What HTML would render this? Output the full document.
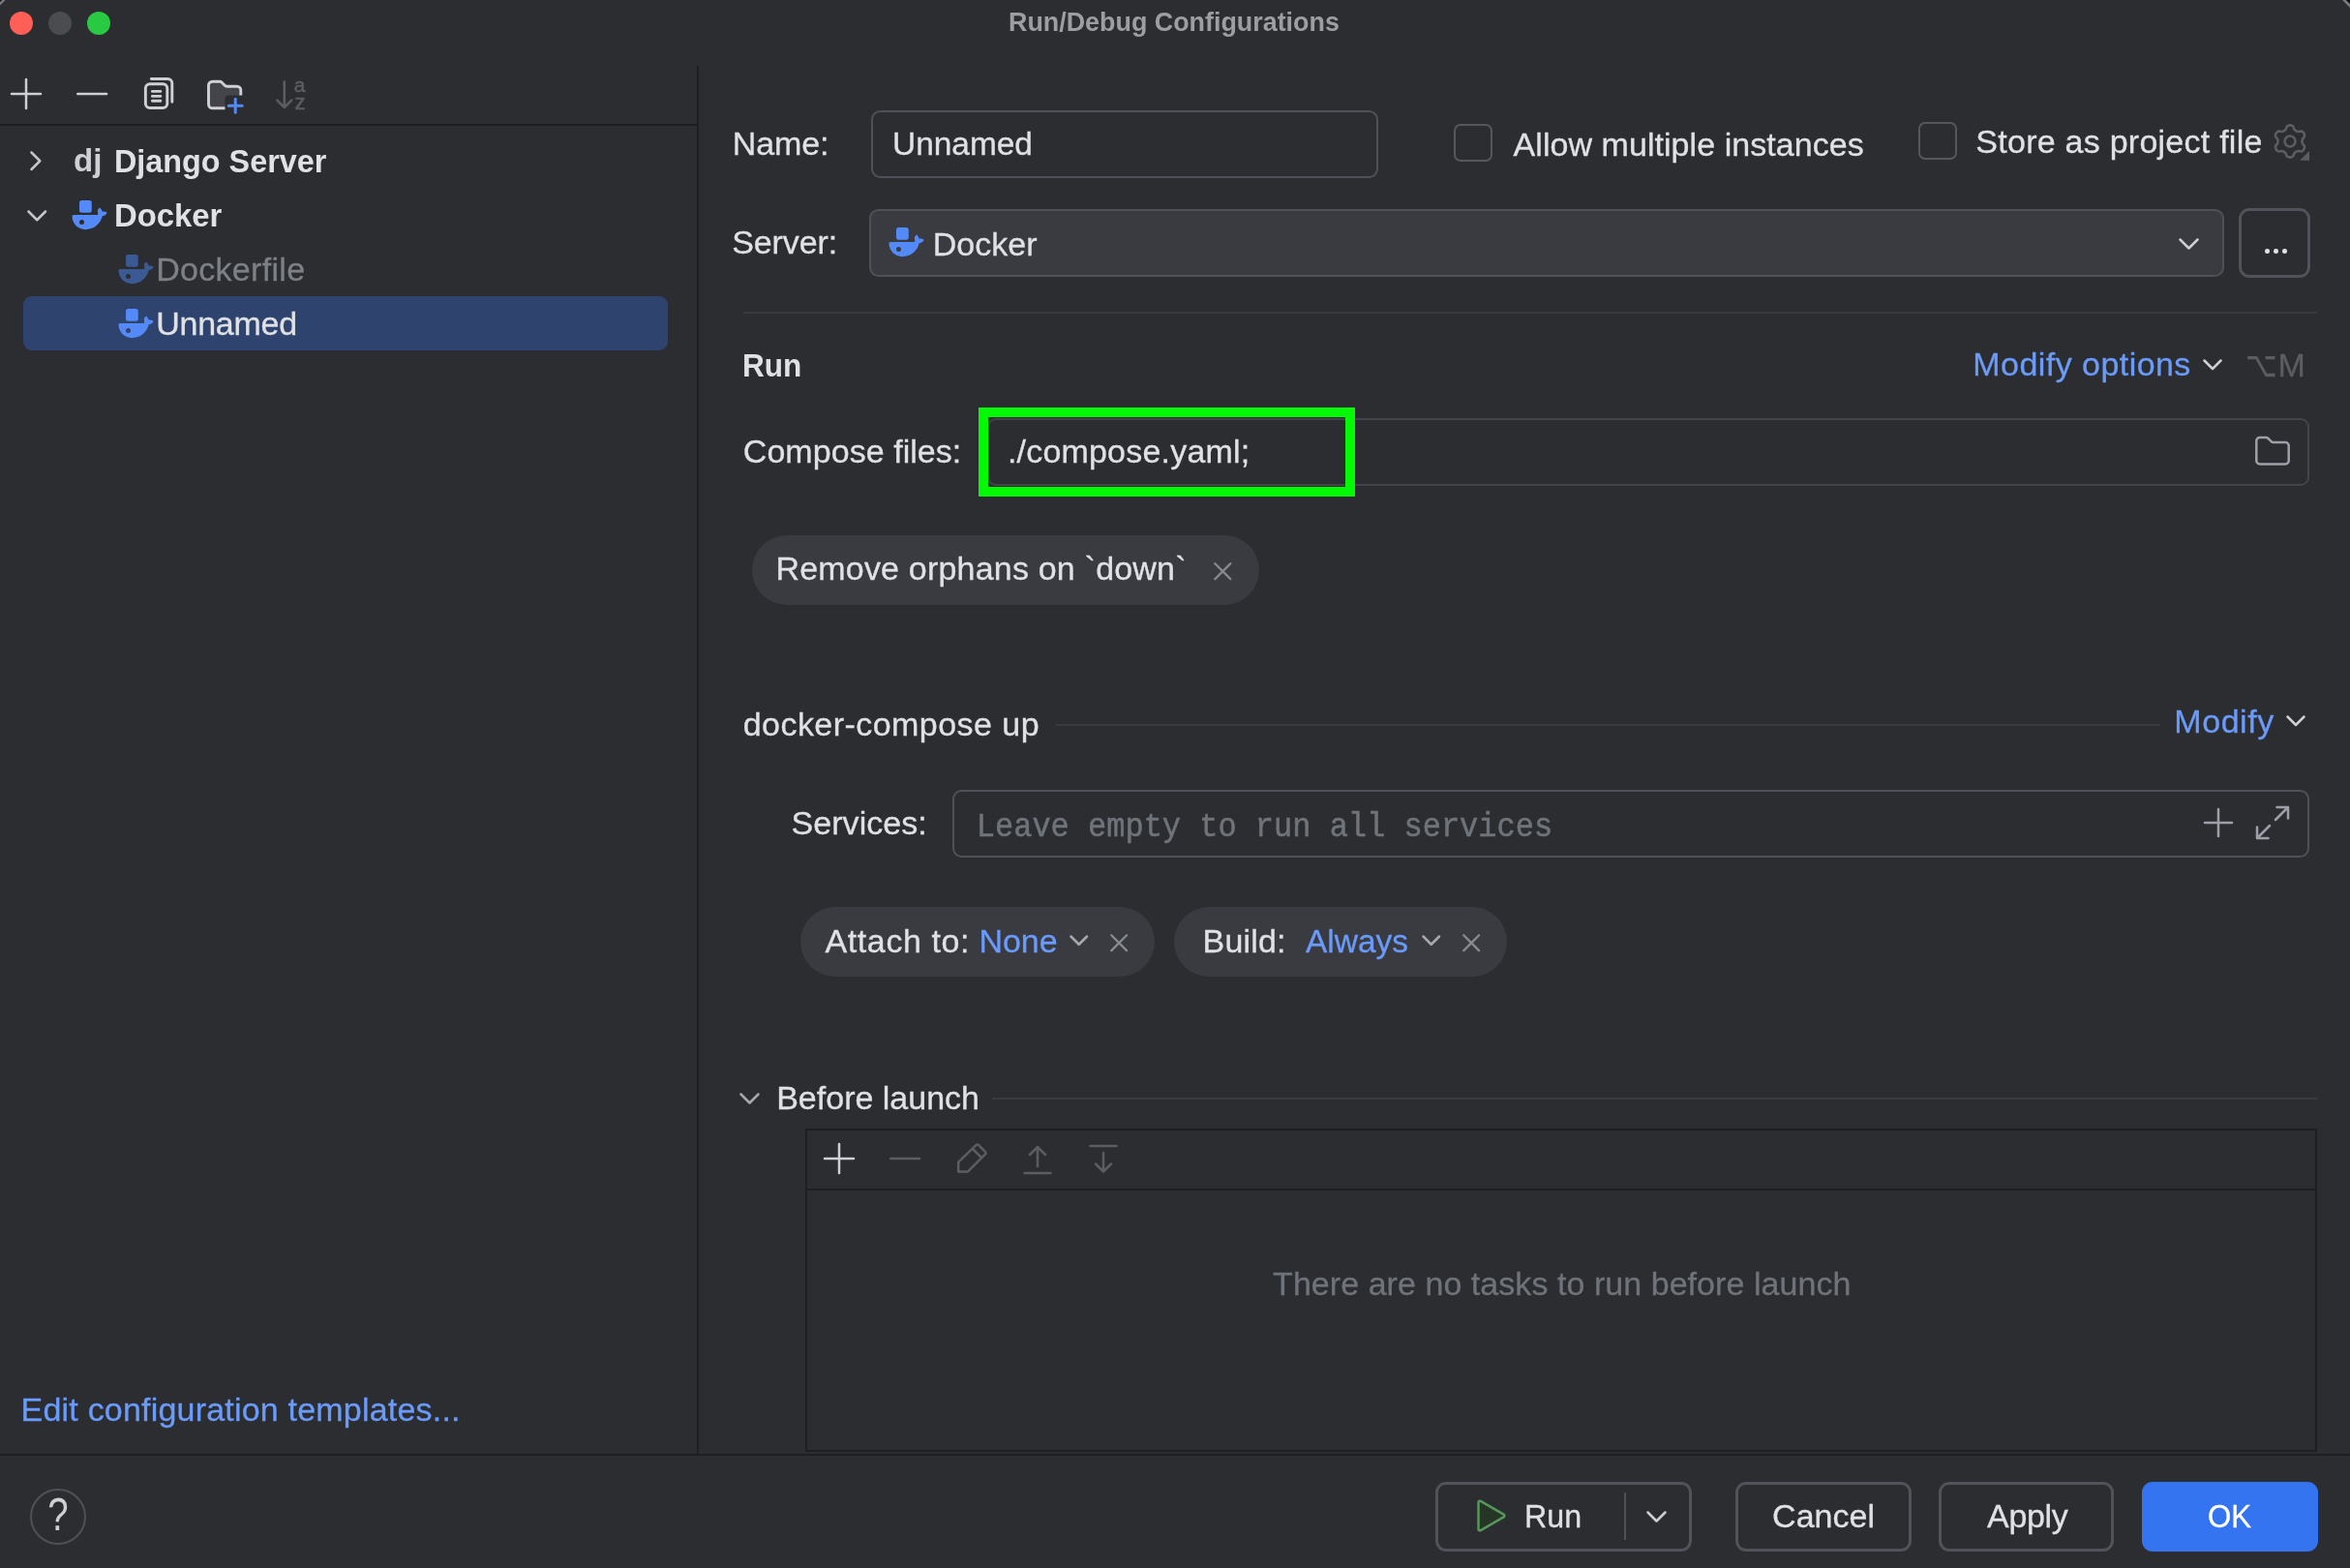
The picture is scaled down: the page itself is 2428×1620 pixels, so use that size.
<!DOCTYPE html>
<html lang="en"><head><meta charset="utf-8"><title>Run/Debug Configurations</title>
<style>
html,body{margin:0;padding:0}
body{width:2428px;height:1620px;background:#2b2d30;position:relative;overflow:hidden;font-family:"Liberation Sans", sans-serif;}
#app{position:absolute;left:0;top:0;width:2428px;height:1620px;will-change:transform}
.b{position:absolute;box-sizing:border-box}
.i{position:absolute;overflow:visible}
.t{position:absolute;white-space:pre;height:60px;line-height:60px;-webkit-text-stroke:0.3px}
</style></head>
<body>
<div id="app">
<div class="b" style="left:0px;top:127.5px;width:720px;height:2.5px;background:#1e1f22;"></div>
<div class="b" style="left:720px;top:68px;width:2px;height:1435px;background:#1e1f22;"></div>
<div class="b" style="left:0px;top:1501.5px;width:2428px;height:2.5px;background:#1e1f22;"></div>
<div class="b" style="left:0;top:0;width:7px;height:7px;background:linear-gradient(135deg,#0c0c0d 0,#0c0c0d 10%,#85878b 24%,#85878b 30%,rgba(43,45,48,0) 46%)"></div>
<div class="b" style="left:2419px;top:0;width:9px;height:9px;background:linear-gradient(225deg,#0c0c0d 0,#0c0c0d 18%,#85878b 30%,#85878b 36%,rgba(43,45,48,0) 50%)"></div>
<div class="b" style="left:9.9px;top:11.799999999999999px;width:24.200000000000003px;height:24.200000000000003px;background:#ff5f57;border-radius:50%;"></div>
<div class="b" style="left:49.9px;top:11.799999999999999px;width:24.199999999999996px;height:24.200000000000003px;background:#4b4c4f;border-radius:50%;"></div>
<div class="b" style="left:89.80000000000001px;top:11.799999999999999px;width:24.19999999999999px;height:24.200000000000003px;background:#2ac944;border-radius:50%;"></div>
<svg class="i" style="left:9.8px;top:80.0px" width="34" height="34" viewBox="-2 -2 34 34" ><path d="M15.0 0V30M0 15.0H30" fill="none" stroke="#ced0d6" stroke-width="2.5" stroke-linecap="round"/></svg>
<svg class="i" style="left:78.6px;top:93.8px" width="32.4" height="6" viewBox="0 0 32.4 6" ><path d="M1.25 3H31.15" fill="none" stroke="#ced0d6" stroke-width="2.5" stroke-linecap="round"/></svg>
<svg class="i" style="left:143px;top:77px" width="40" height="40" viewBox="0 0 40 40" ><g fill="none" stroke="#ced0d6" stroke-width="2.9" stroke-linecap="round" stroke-linejoin="round"><rect x="7.35" y="9.75" width="22.45" height="24.8" rx="4.5"/><path d="M13.3 4.45H30.3A4.5 4.5 0 0 1 34.8 8.95V28.3"/><path d="M14.4 17.4H22.8M14.4 22.4H22.8M14.4 27.3H22.8"/></g></svg>
<svg class="i" style="left:211px;top:77px" width="44" height="44" viewBox="0 0 44 44" ><path d="M4.5 11.2A4 4 0 0 1 8.5 7.2H15.9A3 3 0 0 1 18 8.1L21.2 11.3A3 3 0 0 0 23.3 12.2H33.8A4 4 0 0 1 37.8 16.2V30.8A4 4 0 0 1 33.8 34.8H8.5A4 4 0 0 1 4.5 30.8Z" fill="#43454a" stroke="#ced0d6" stroke-width="2.9" stroke-linejoin="round"/><rect x="21.5" y="21.5" width="24" height="24" rx="4" fill="#2b2d30"/><path d="M32.2 25.3V39.3M25.2 32.3H39.2" fill="none" stroke="#548af7" stroke-width="3" stroke-linecap="round"/></svg>
<svg class="i" style="left:280px;top:77px" width="40" height="40" viewBox="0 0 40 40" ><path d="M13.8 7.6V34M6.4 26.6L13.8 34L21.2 26.6" fill="none" stroke="#5c5d61" stroke-width="2.6" stroke-linecap="round" stroke-linejoin="round"/></svg>
<span class="t" style="left:303.7px;top:58px;font-size:21px;color:#5c5d61;-webkit-text-stroke:0.6px">a</span>
<span class="t" style="left:304.5px;top:75.5px;font-size:22px;color:#5c5d61;-webkit-text-stroke:0.6px">z</span>
<div class="b" style="left:24px;top:306px;width:666px;height:56px;background:#2e436e;border-radius:9px;"></div>
<svg class="i" style="left:30.1px;top:154.8px" width="13.75" height="22.5" viewBox="0 0 13.75 22.5" ><path d="M2.5 2.5L11.25 11.25L2.5 20.0" fill="none" stroke="#c3c6cd" stroke-width="2.5" stroke-linecap="round" stroke-linejoin="round"/></svg>
<svg class="i" style="left:26.8px;top:215.6px" width="22.5" height="13.75" viewBox="0 0 22.5 13.75" ><path d="M2.5 2.5L11.25 11.25L20.0 2.5" fill="none" stroke="#c3c6cd" stroke-width="2.5" stroke-linecap="round" stroke-linejoin="round"/></svg>
<svg class="i" style="left:72px;top:202px" width="40" height="40" viewBox="0 0 16 16" ><rect x="4" y="2" width="5.1" height="5.1" rx="1" fill="#548af7"/><path fill="#548af7" d="M1.6 8H11.3C11.65 7.95 11.8 7.65 11.7 7.3C11.4 6.5 11.5 5.75 12.05 5.25C12.25 5.1 12.5 5.1 12.7 5.3C13.1 5.7 13.4 6.2 13.5 6.7C14.1 6.5 14.7 6.6 15.2 6.9C15.4 7.05 15.4 7.3 15.25 7.5C14.8 8.05 14.2 8.4 13.5 8.5C12.6 11.8 10 14.05 6.5 14.05C3.5 14.05 1 11.6 1 8.6C1 8.3 1.3 8 1.6 8Z"/><circle cx="5" cy="10.95" r="1" fill="#2b2d30"/></svg>
<svg class="i" style="left:120px;top:258px" width="40" height="40" viewBox="0 0 16 16" ><rect x="4" y="2" width="5.1" height="5.1" rx="1" fill="#3b5a94"/><path fill="#3b5a94" d="M1.6 8H11.3C11.65 7.95 11.8 7.65 11.7 7.3C11.4 6.5 11.5 5.75 12.05 5.25C12.25 5.1 12.5 5.1 12.7 5.3C13.1 5.7 13.4 6.2 13.5 6.7C14.1 6.5 14.7 6.6 15.2 6.9C15.4 7.05 15.4 7.3 15.25 7.5C14.8 8.05 14.2 8.4 13.5 8.5C12.6 11.8 10 14.05 6.5 14.05C3.5 14.05 1 11.6 1 8.6C1 8.3 1.3 8 1.6 8Z"/><circle cx="5" cy="10.95" r="1" fill="#2b2d30"/></svg>
<svg class="i" style="left:120px;top:314px" width="40" height="40" viewBox="0 0 16 16" ><rect x="4" y="2" width="5.1" height="5.1" rx="1" fill="#548af7"/><path fill="#548af7" d="M1.6 8H11.3C11.65 7.95 11.8 7.65 11.7 7.3C11.4 6.5 11.5 5.75 12.05 5.25C12.25 5.1 12.5 5.1 12.7 5.3C13.1 5.7 13.4 6.2 13.5 6.7C14.1 6.5 14.7 6.6 15.2 6.9C15.4 7.05 15.4 7.3 15.25 7.5C14.8 8.05 14.2 8.4 13.5 8.5C12.6 11.8 10 14.05 6.5 14.05C3.5 14.05 1 11.6 1 8.6C1 8.3 1.3 8 1.6 8Z"/><circle cx="5" cy="10.95" r="1" fill="#2e436e"/></svg>
<div class="b" style="left:900.2px;top:114.4px;width:523.8px;height:69.6px;border:2.5px solid #4e5157;border-radius:9.5px;"></div>
<div class="b" style="left:1502.3px;top:128px;width:39.299999999999955px;height:39.30000000000001px;border:2.5px solid #55575d;border-radius:7px;"></div>
<div class="b" style="left:1982.3px;top:126.2px;width:39.299999999999955px;height:39.3px;border:2.5px solid #55575d;border-radius:7px;"></div>
<svg class="i" style="left:2345.1px;top:125.1px" width="42" height="42" viewBox="0 0 42 42" ><path d="M33.50 21.00L33.53 20.45L33.61 19.90L33.75 19.32L33.95 18.72L34.25 18.06L35.05 17.23L35.81 16.33L35.99 15.54L36.01 14.78L35.90 14.05L35.69 13.35L35.38 12.70L34.97 12.10L34.47 11.57L33.89 11.11L33.22 10.75L32.45 10.51L31.29 10.71L30.17 10.99L29.45 10.93L28.83 10.80L28.26 10.63L27.74 10.42L27.25 10.17L26.79 9.88L26.35 9.53L25.92 9.12L25.50 8.64L25.08 8.05L24.77 6.95L24.36 5.84L23.77 5.29L23.12 4.89L22.43 4.62L21.72 4.45L21.00 4.40L20.28 4.45L19.57 4.62L18.88 4.89L18.23 5.29L17.64 5.84L17.23 6.95L16.92 8.05L16.50 8.64L16.08 9.12L15.65 9.53L15.21 9.88L14.75 10.17L14.26 10.42L13.74 10.63L13.17 10.80L12.55 10.93L11.83 10.99L10.71 10.71L9.55 10.51L8.78 10.75L8.11 11.11L7.53 11.57L7.03 12.10L6.62 12.70L6.31 13.35L6.10 14.05L5.99 14.78L6.01 15.54L6.19 16.33L6.95 17.23L7.75 18.06L8.05 18.72L8.25 19.32L8.39 19.90L8.47 20.45L8.50 21.00L8.47 21.55L8.39 22.10L8.25 22.68L8.05 23.28L7.75 23.94L6.95 24.77L6.19 25.67L6.01 26.46L5.99 27.22L6.10 27.95L6.31 28.65L6.62 29.30L7.03 29.90L7.53 30.43L8.11 30.89L8.78 31.25L9.55 31.49L10.71 31.29L11.83 31.01L12.55 31.07L13.17 31.20L13.74 31.37L14.26 31.58L14.75 31.83L15.21 32.12L15.65 32.47L16.08 32.88L16.50 33.36L16.92 33.95L17.23 35.05L17.64 36.16L18.23 36.71L18.88 37.11L19.57 37.38L20.28 37.55L21.00 37.60L21.72 37.55L22.43 37.38L23.12 37.11L23.77 36.71L24.36 36.16L24.77 35.05L25.08 33.95L25.50 33.36L25.92 32.88L26.35 32.47L26.79 32.12L27.25 31.83L27.74 31.58L28.26 31.37L28.83 31.20L29.45 31.07L30.17 31.01L31.29 31.29L32.45 31.49L33.22 31.25L33.89 30.89L34.47 30.43L34.97 29.90L35.38 29.30L35.69 28.65L35.90 27.95L36.01 27.22L35.99 26.46L35.81 25.67L35.05 24.77L34.25 23.94L33.95 23.28L33.75 22.68L33.61 22.10L33.53 21.55Z" fill="none" stroke="#5c5d61" stroke-width="2.6" stroke-linejoin="round"/><circle cx="21" cy="21" r="5.5" fill="none" stroke="#5c5d61" stroke-width="2.6"/><path d="M41 30.9V40.7H31Z" fill="#5c5d61"/></svg>
<div class="b" style="left:898.3px;top:216px;width:1399.3px;height:70px;background:#393b41;border:2.5px solid #4e5157;border-radius:9.5px;"></div>
<svg class="i" style="left:916px;top:230px" width="40" height="40" viewBox="0 0 16 16" ><rect x="4" y="2" width="5.1" height="5.1" rx="1" fill="#548af7"/><path fill="#548af7" d="M1.6 8H11.3C11.65 7.95 11.8 7.65 11.7 7.3C11.4 6.5 11.5 5.75 12.05 5.25C12.25 5.1 12.5 5.1 12.7 5.3C13.1 5.7 13.4 6.2 13.5 6.7C14.1 6.5 14.7 6.6 15.2 6.9C15.4 7.05 15.4 7.3 15.25 7.5C14.8 8.05 14.2 8.4 13.5 8.5C12.6 11.8 10 14.05 6.5 14.05C3.5 14.05 1 11.6 1 8.6C1 8.3 1.3 8 1.6 8Z"/><circle cx="5" cy="10.95" r="1" fill="#393b41"/></svg>
<svg class="i" style="left:2249.5px;top:244.5px" width="23.0" height="14.0" viewBox="0 0 23.0 14.0" ><path d="M2.5 2.5L11.5 11.5L20.5 2.5" fill="none" stroke="#ced0d6" stroke-width="2.5" stroke-linecap="round" stroke-linejoin="round"/></svg>
<div class="b" style="left:2312.6px;top:214.6px;width:74.20000000000027px;height:72.20000000000002px;border:3px solid #505359;border-radius:11px;"></div>
<div class="b" style="left:2340.0px;top:257.3px;width:4.600000000000364px;height:4.600000000000023px;background:#dfe1e5;border-radius:50%;"></div>
<div class="b" style="left:2349.1px;top:257.3px;width:4.600000000000364px;height:4.600000000000023px;background:#dfe1e5;border-radius:50%;"></div>
<div class="b" style="left:2358.1px;top:257.3px;width:4.600000000000364px;height:4.600000000000023px;background:#dfe1e5;border-radius:50%;"></div>
<div class="b" style="left:768px;top:322px;width:1626px;height:2px;background:#393b40;"></div>
<svg class="i" style="left:2274.5px;top:370.2px" width="22.0" height="13.5" viewBox="0 0 22.0 13.5" ><path d="M2.5 2.5L11.0 11.0L19.5 2.5" fill="none" stroke="#ced0d6" stroke-width="2.5" stroke-linecap="round" stroke-linejoin="round"/></svg>
<span class="t" style="left:2319.5px;top:346.5px;font-size:36px;color:#5c5d61;transform:scaleX(0.78);transform-origin:0 50%;font-family:'DejaVu Sans',sans-serif">⌥</span>
<span class="t" style="left:2353.5px;top:346.7px;font-size:34px;color:#5c5d61">M</span>
<div class="b" style="left:1020px;top:432px;width:1366px;height:69.5px;border:2px solid #43454a;border-radius:9px;"></div>
<div class="b" style="left:1010.8px;top:421.2px;width:388.79999999999995px;height:92.00000000000006px;border:10.5px solid #04f904;"></div>
<svg class="i" style="left:2326px;top:446px" width="44" height="40" viewBox="0 0 44 40" ><path d="M5.3 9.5A3.5 3.5 0 0 1 8.8 6H15.3A3 3 0 0 1 17.4 6.9L20.6 10.1A3 3 0 0 0 22.7 11H35.2A3.5 3.5 0 0 1 38.7 14.5V30A3.5 3.5 0 0 1 35.2 33.5H8.8A3.5 3.5 0 0 1 5.3 30Z" fill="none" stroke="#9da0a8" stroke-width="2.5" stroke-linejoin="round"/></svg>
<div class="b" style="left:777px;top:553px;width:524px;height:72px;background:#393b41;border-radius:36px;"></div>
<svg class="i" style="left:1253.3px;top:579.7px" width="20.6" height="20.6" viewBox="0 0 20.6 20.6" ><path d="M2.3 2.3L18.3 18.3M18.3 2.3L2.3 18.3" fill="none" stroke="#868a91" stroke-width="2.3" stroke-linecap="round"/></svg>
<div class="b" style="left:1090.5px;top:748px;width:1141.5px;height:2px;background:#393b40;"></div>
<svg class="i" style="left:2361.0px;top:737.8px" width="22.0" height="13.5" viewBox="0 0 22.0 13.5" ><path d="M2.5 2.5L11.0 11.0L19.5 2.5" fill="none" stroke="#ced0d6" stroke-width="2.5" stroke-linecap="round" stroke-linejoin="round"/></svg>
<div class="b" style="left:984.3px;top:816px;width:1401.8999999999999px;height:69.60000000000002px;border:2.5px solid #4e5157;border-radius:9.5px;"></div>
<svg class="i" style="left:2276.0px;top:834.0px" width="32" height="32" viewBox="-2 -2 32 32" ><path d="M14.0 0V28M0 14.0H28" fill="none" stroke="#9da0a8" stroke-width="2.5" stroke-linecap="round"/></svg>
<svg class="i" style="left:2326px;top:828px" width="44" height="44" viewBox="0 0 44 44" ><path d="M26.5 6H38V17.5M38 6L25 19M17.5 38H6V26.5M6 38L19 25" fill="none" stroke="#9da0a8" stroke-width="2.5" stroke-linecap="round" stroke-linejoin="round"/></svg>
<div class="b" style="left:826.8px;top:937px;width:366.20000000000005px;height:72px;background:#393b41;border-radius:36px;"></div>
<div class="b" style="left:1212.6px;top:937px;width:344.4000000000001px;height:72px;background:#393b41;border-radius:36px;"></div>
<svg class="i" style="left:1103.5px;top:965.2px" width="21.5" height="13.25" viewBox="0 0 21.5 13.25" ><path d="M2.5 2.5L10.75 10.75L19.0 2.5" fill="none" stroke="#a6a9af" stroke-width="2.5" stroke-linecap="round" stroke-linejoin="round"/></svg>
<svg class="i" style="left:1146.4px;top:963.8px" width="20.4" height="20.4" viewBox="0 0 20.4 20.4" ><path d="M2.3 2.3L18.1 18.1M18.1 2.3L2.3 18.1" fill="none" stroke="#868a91" stroke-width="2.3" stroke-linecap="round"/></svg>
<svg class="i" style="left:1467.7px;top:965.2px" width="21.5" height="13.25" viewBox="0 0 21.5 13.25" ><path d="M2.5 2.5L10.75 10.75L19.0 2.5" fill="none" stroke="#a6a9af" stroke-width="2.5" stroke-linecap="round" stroke-linejoin="round"/></svg>
<svg class="i" style="left:1509.6px;top:963.8px" width="20.4" height="20.4" viewBox="0 0 20.4 20.4" ><path d="M2.3 2.3L18.1 18.1M18.1 2.3L2.3 18.1" fill="none" stroke="#868a91" stroke-width="2.3" stroke-linecap="round"/></svg>
<svg class="i" style="left:762.5px;top:1127.5px" width="23.0" height="14.0" viewBox="0 0 23.0 14.0" ><path d="M2.5 2.5L11.5 11.5L20.5 2.5" fill="none" stroke="#a6a9af" stroke-width="2.5" stroke-linecap="round" stroke-linejoin="round"/></svg>
<div class="b" style="left:1024.5px;top:1133.5px;width:1369.5px;height:2.0px;background:#393b40;"></div>
<div class="b" style="left:832px;top:1166px;width:1562px;height:333.5px;border:2px solid #1e1f22;"></div>
<div class="b" style="left:834px;top:1228px;width:1558px;height:2px;background:#1e1f22;"></div>
<svg class="i" style="left:849.6px;top:1179.8px" width="34" height="34" viewBox="-2 -2 34 34" ><path d="M15.0 0V30M0 15.0H30" fill="none" stroke="#ced0d6" stroke-width="2.5" stroke-linecap="round"/></svg>
<svg class="i" style="left:918.7px;top:1193.8px" width="32.3" height="6" viewBox="0 0 32.3 6" ><path d="M1.25 3H31.05" fill="none" stroke="#5c5d61" stroke-width="2.5" stroke-linecap="round"/></svg>
<svg class="i" style="left:984px;top:1177px" width="40" height="40" viewBox="0 0 40 40" ><path d="M27.2 6.2L33.8 12.8A2 2 0 0 1 33.8 15.6L16 33.4H6.2V23.6L24.4 6.2A2 2 0 0 1 27.2 6.2ZM20.5 9.5L30 19" fill="none" stroke="#5c5d61" stroke-width="2.5" stroke-linejoin="round"/></svg>
<svg class="i" style="left:1052px;top:1177px" width="40" height="40" viewBox="0 0 40 40" ><path d="M20 8V28M12 16L20 8L28 16M6.5 35H33.5" fill="none" stroke="#5c5d61" stroke-width="2.5" stroke-linecap="round" stroke-linejoin="round"/></svg>
<svg class="i" style="left:1120px;top:1177px" width="40" height="40" viewBox="0 0 40 40" ><path d="M6.5 7H33.5M20 14V33.5M12 25.5L20 33.5L28 25.5" fill="none" stroke="#5c5d61" stroke-width="2.5" stroke-linecap="round" stroke-linejoin="round"/></svg>
<div class="b" style="left:31px;top:1537.5px;width:58px;height:58.0px;border:2px solid #4e5157;border-radius:50%;"></div>
<span class="t" style="left:30px;top:1535px;width:60px;text-align:center;font-size:48px;color:#ced0d6;transform:scaleX(0.8);-webkit-text-stroke:0">?</span>
<div class="b" style="left:1482.7px;top:1530.8px;width:265.5999999999999px;height:72.0px;border:3px solid #505359;border-radius:11px;"></div>
<svg class="i" style="left:1520px;top:1546px" width="40" height="40" viewBox="0 0 40 40" ><path d="M7.5 6.2A1.5 1.5 0 0 1 9.8 4.9L33.6 18.7A1.5 1.5 0 0 1 33.6 21.3L9.8 35.1A1.5 1.5 0 0 1 7.5 33.8Z" fill="#253627" stroke="#57965c" stroke-width="2.5" stroke-linejoin="round"/></svg>
<div class="b" style="left:1678px;top:1542px;width:2px;height:49px;background:#4e5157;"></div>
<svg class="i" style="left:1700.3px;top:1559.5px" width="23.0" height="14.0" viewBox="0 0 23.0 14.0" ><path d="M2.5 2.5L11.5 11.5L20.5 2.5" fill="none" stroke="#ced0d6" stroke-width="2.5" stroke-linecap="round" stroke-linejoin="round"/></svg>
<div class="b" style="left:1792.5px;top:1530.8px;width:182.0999999999999px;height:72.0px;border:3px solid #505359;border-radius:11px;"></div>
<div class="b" style="left:2002.5px;top:1530.8px;width:181.9000000000001px;height:72.0px;border:3px solid #505359;border-radius:11px;"></div>
<div class="b" style="left:2212.5px;top:1530.8px;width:182.0px;height:72.0px;background:#3574f0;border-radius:11px;"></div>
<span class="t" style="left:1042.42px;top:-7.0px;font-size:28px;font-weight:700;color:#9d9ea2;letter-spacing:0.00px;-webkit-text-stroke:0;transform:scaleX(0.9597);transform-origin:0 50%;">Run/Debug Configurations</span>
<span class="t" style="left:75.68px;top:135.3px;font-size:34px;font-weight:700;color:#ced0d6;letter-spacing:0.00px;-webkit-text-stroke:0;transform:scaleX(0.9736);transform-origin:0 50%;">dj</span>
<span class="t" style="left:117.86px;top:135.6px;font-size:34px;font-weight:700;color:#dfe1e5;letter-spacing:0.00px;-webkit-text-stroke:0;transform:scaleX(0.9515);transform-origin:0 50%;">Django Server</span>
<span class="t" style="left:117.83px;top:191.6px;font-size:34px;font-weight:700;color:#dfe1e5;letter-spacing:0.00px;-webkit-text-stroke:0;transform:scaleX(0.9662);transform-origin:0 50%;">Docker</span>
<span class="t" style="left:161.2px;top:248.0px;font-size:34px;font-weight:400;color:#7d8087;letter-spacing:0.30px;">Dockerfile</span>
<span class="t" style="left:161.2px;top:304.0px;font-size:34px;font-weight:400;color:#dfe1e5;letter-spacing:-0.25px;">Unnamed</span>
<span class="t" style="left:756.8px;top:118.4px;font-size:34px;font-weight:400;color:#dfe1e5;letter-spacing:-0.15px;">Name:</span>
<span class="t" style="left:921.84px;top:118.2px;font-size:34px;font-weight:400;color:#dfe1e5;letter-spacing:0.00px;transform:scaleX(0.9832);transform-origin:0 50%;">Unnamed</span>
<span class="t" style="left:1563.6px;top:118.5px;font-size:34px;font-weight:400;color:#dfe1e5;letter-spacing:0.05px;">Allow multiple instances</span>
<span class="t" style="left:2041.35px;top:115.8px;font-size:34px;font-weight:400;color:#dfe1e5;letter-spacing:0.25px;">Store as project file</span>
<span class="t" style="left:756.15px;top:220.3px;font-size:34px;font-weight:400;color:#dfe1e5;letter-spacing:-0.10px;">Server:</span>
<span class="t" style="left:963.8px;top:222.3px;font-size:34px;font-weight:400;color:#dfe1e5;letter-spacing:0.00px;">Docker</span>
<span class="t" style="left:766.91px;top:347.0px;font-size:34px;font-weight:700;color:#dfe1e5;letter-spacing:0.00px;-webkit-text-stroke:0;transform:scaleX(0.9279);transform-origin:0 50%;">Run</span>
<span class="t" style="left:2038.3px;top:346.4px;font-size:34px;font-weight:400;color:#6b9bfa;letter-spacing:0.45px;">Modify options</span>
<span class="t" style="left:767.8px;top:436.2px;font-size:34px;font-weight:400;color:#dfe1e5;letter-spacing:0.05px;">Compose files:</span>
<span class="t" style="left:1040.9px;top:436.2px;font-size:34px;font-weight:400;color:#dfe1e5;letter-spacing:0.20px;">./compose.yaml;</span>
<span class="t" style="left:801.4px;top:557.3px;font-size:34px;font-weight:400;color:#dfe1e5;letter-spacing:0.20px;">Remove orphans on `down`</span>
<span class="t" style="left:767.75px;top:718.0px;font-size:34px;font-weight:400;color:#dfe1e5;letter-spacing:0.45px;">docker-compose up</span>
<span class="t" style="left:2246.3px;top:715.0px;font-size:34px;font-weight:400;color:#6b9bfa;letter-spacing:0.55px;">Modify</span>
<span class="t" style="left:817.55px;top:819.8px;font-size:34px;font-weight:400;color:#dfe1e5;letter-spacing:0.05px;">Services:</span>
<span class="t" style="left:1008.8px;top:824.7px;font-size:32px;font-weight:400;color:#6f737a;letter-spacing:0.00px;font-family:'Liberation Mono', monospace;transform:scaleY(1.1);-webkit-text-stroke:0.5px;">Leave empty to run all services</span>
<span class="t" style="left:852.5px;top:941.6px;font-size:34px;font-weight:400;color:#dfe1e5;letter-spacing:0.60px;">Attach to:</span>
<span class="t" style="left:1011.6px;top:941.6px;font-size:34px;font-weight:400;color:#6b9bfa;letter-spacing:-0.10px;">None</span>
<span class="t" style="left:1242.6px;top:941.6px;font-size:34px;font-weight:400;color:#dfe1e5;letter-spacing:0.15px;">Build:</span>
<span class="t" style="left:1349.3px;top:941.6px;font-size:34px;font-weight:400;color:#6b9bfa;letter-spacing:0.00px;transform:scaleX(0.9845);transform-origin:0 50%;">Always</span>
<span class="t" style="left:802.2px;top:1103.6px;font-size:34px;font-weight:400;color:#dfe1e5;letter-spacing:0.00px;">Before launch</span>
<span class="t" style="left:1315.1px;top:1295.8px;font-size:34px;font-weight:400;color:#6f737a;letter-spacing:0.05px;">There are no tasks to run before launch</span>
<span class="t" style="left:21.6px;top:1425.6px;font-size:34px;font-weight:400;color:#6b9bfa;letter-spacing:0.20px;">Edit configuration templates...</span>
<span class="t" style="left:1574.93px;top:1536.4px;font-size:34px;font-weight:400;color:#dfe1e5;letter-spacing:0.00px;transform:scaleX(0.9472);transform-origin:0 50%;">Run</span>
<span class="t" style="left:1831.1px;top:1536.4px;font-size:34px;font-weight:400;color:#dfe1e5;letter-spacing:0.00px;">Cancel</span>
<span class="t" style="left:2053.0px;top:1536.4px;font-size:34px;font-weight:400;color:#dfe1e5;letter-spacing:-0.30px;">Apply</span>
<span class="t" style="left:2281.42px;top:1536.4px;font-size:34px;font-weight:400;color:#ffffff;letter-spacing:0.00px;transform:scaleX(0.9179);transform-origin:0 50%;">OK</span>
</div>
</body></html>
